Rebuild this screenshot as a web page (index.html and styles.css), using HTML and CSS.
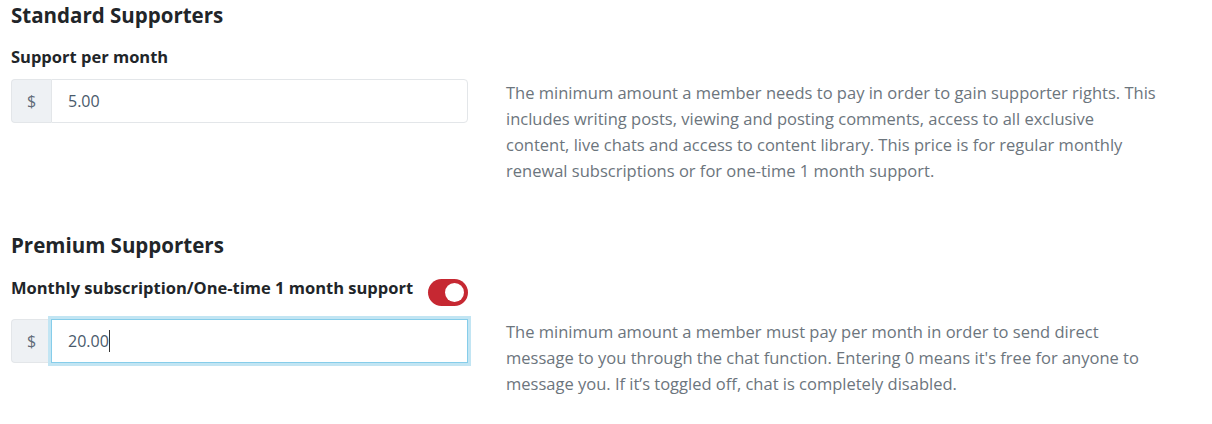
FILE: index.html
```html
<!DOCTYPE html>
<html lang="en">
<head>
<meta charset="utf-8">
<title>Supporters</title>
<link rel="stylesheet" href="styles.css">
</head>
<body>
<div class="page">
  <section class="tier">
    <h3 class="tier-title">Standard Supporters</h3>
    <div class="label-row">
      <label class="field-label" for="std">Support per month</label>
    </div>
    <div class="tier-row">
      <div class="input-group">
        <span class="prepend">$</span>
        <input id="std" class="amount" type="text" value="5.00">
      </div>
      <p class="help">The minimum amount a member needs to pay in order to gain supporter rights. This<br>includes writing posts, viewing and posting comments, access to all exclusive<br>content, live chats and access to content library. This price is for regular monthly<br>renewal subscriptions or for one-time 1 month support.</p>
    </div>
  </section>

  <section class="tier tier-premium">
    <h3 class="tier-title">Premium Supporters</h3>
    <div class="label-row with-toggle">
      <label class="field-label" for="prem">Monthly subscription/One-time 1 month support</label>
      <span class="toggle"><span class="knob"></span></span>
    </div>
    <div class="tier-row">
      <div class="input-group">
        <span class="prepend">$</span>
        <div class="amount focused">20.00<span class="caret"></span></div>
      </div>
      <p class="help">The minimum amount a member must pay per month in order to send direct<br>message to you through the chat function. Entering 0 means it's free for anyone to<br>message you. If it’s toggled off, chat is completely disabled.</p>
    </div>
  </section>
</div>
</body>
</html>
```

FILE: styles.css
```css
html, body {
  margin: 0;
  padding: 0;
  background: #ffffff;
}

body {
  font-family: "Open Sans", "Noto Sans", "Liberation Sans", sans-serif;
  color: #212529;
}

.page {
  padding: 0 0 0 11px;
}

.tier-title {
  margin: 0;
  padding-top: 2px;
  font-size: 20.5px;
  line-height: 26px;
  font-weight: 700;
  color: #212529;
}

.label-row {
  display: flex;
  align-items: flex-start;
  justify-content: space-between;
  width: 457px;
  margin-top: 15px;
}

.field-label {
  font-size: 16.5px;
  line-height: 28px;
  font-weight: 700;
  color: #212529;
}

.tier-row {
  display: grid;
  grid-template-columns: 457px 700px;
  column-gap: 38px;
  margin-top: 8px;
}

.with-toggle {
  margin-top: 16px;
}

.with-toggle + .tier-row {
  margin-top: 13px;
}

.input-group {
  display: flex;
  height: 44px;
  align-self: start;
}

.prepend {
  width: 39px;
  display: flex;
  align-items: center;
  justify-content: center;
  background: #eef1f4;
  border: 1px solid #e3e6e9;
  border-right: none;
  border-radius: 4px 0 0 4px;
  color: #5f6b78;
  font-size: 16px;
}

.amount {
  flex: 1;
  box-sizing: border-box;
  height: 44px;
  margin: 0;
  padding: 0 16px;
  border: 1px solid #e3e6e9;
  border-radius: 0 4px 4px 0;
  font-family: inherit;
  font-size: 16px;
  color: #495a6b;
  background: #fff;
  outline: none;
  display: flex;
  align-items: center;
}

.amount.focused {
  border-color: #86cdea;
  box-shadow: 0 0 0 3px #c2e5f3;
  border-radius: 0;
}

.caret {
  display: inline-block;
  width: 1px;
  height: 22px;
  background: #333;
}

.help {
  margin: 1px 0 0;
  font-size: 16.5px;
  line-height: 26px;
  color: #6c757d;
  white-space: nowrap;
}

.tier-premium {
  margin-top: 46px;
}

.tier-premium .help {
  margin-top: 0;
}

.toggle {
  position: relative;
  display: inline-block;
  flex: none;
  width: 40px;
  height: 27px;
  margin-top: 5px;
  border-radius: 14px;
  background: #c62832;
}

.knob {
  position: absolute;
  top: 4px;
  right: 4px;
  width: 19px;
  height: 19px;
  border-radius: 50%;
  background: #fff;
}
```
